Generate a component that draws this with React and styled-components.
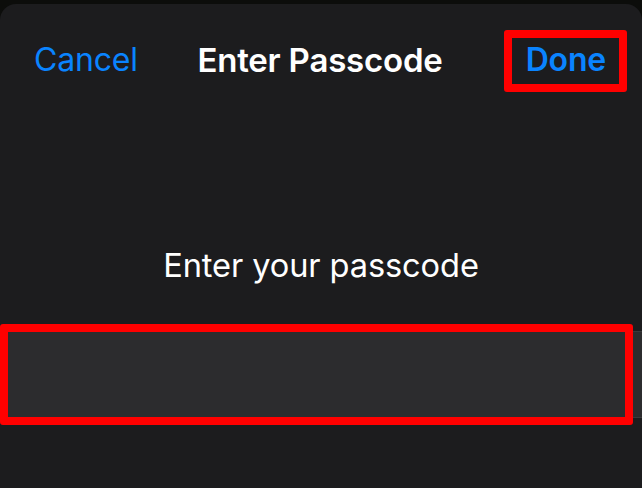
import React from 'react'
import styled, { createGlobalStyle } from 'styled-components'

const Global = createGlobalStyle`
  html, body {
    margin: 0;
    padding: 0;
    background: #0c0d0b;
  }
  body {
    font-family: Inter, 'Noto Sans', 'Liberation Sans', sans-serif;
    -webkit-font-smoothing: antialiased;
  }
`

const Page = styled.div`
  width: 642px;
  height: 488px;
  padding-top: 4px;
  box-sizing: border-box;
  overflow: hidden;
`

const Sheet = styled.div`
  height: 100%;
  background: #1c1c1e;
  border-radius: 16px 16px 0 0;
  display: flex;
  flex-direction: column;
`

const NavBar = styled.div`
  height: 112px;
  display: grid;
  grid-template-columns: 1fr auto 1fr;
  align-items: center;
  padding: 0 36px 0 34px;
`

const NavButton = styled.button`
  background: none;
  border: none;
  padding: 0;
  font-family: inherit;
  font-size: 32px;
  line-height: 38px;
  font-weight: ${p => (p.$bold ? 600 : 400)};
  color: #0a84ff;
  justify-self: ${p => p.$align};
  letter-spacing: -0.2px;
`

const Highlight = styled.span`
  position: relative;
  &::after {
    content: '';
    position: absolute;
    left: -22px;
    right: -21px;
    top: -10px;
    bottom: -13px;
    border: 8px solid #ff0000;
    border-radius: 3px;
    pointer-events: none;
  }
`

const Title = styled.div`
  font-size: 33px;
  line-height: 38px;
  font-weight: 600;
  color: #fff;
  letter-spacing: -0.2px;
`

const Body = styled.div`
  display: flex;
  flex-direction: column;
  align-items: center;
  padding-top: 130px;
`

const Prompt = styled.div`
  font-size: 32.6px;
  line-height: 38px;
  font-weight: 400;
  color: #fff;
  letter-spacing: -0.1px;
`

const Field = styled.div`
  margin-top: 47px;
  align-self: stretch;
  height: 85px;
  background: #2c2c2e;
  border-top: 1px solid #3a3a3c;
  border-bottom: 1px solid #3a3a3c;
  position: relative;
  &::after {
    content: '';
    position: absolute;
    left: 0;
    right: 9px;
    top: -8px;
    bottom: -8px;
    border: 8px solid #ff0000;
    border-radius: 3px;
    pointer-events: none;
  }
`

export default function App() {
  return (
    <>
      <Global />
      <Page>
        <Sheet>
          <NavBar>
            <NavButton $align="start">Cancel</NavButton>
            <Title>Enter Passcode</Title>
            <NavButton $align="end" $bold>
              <Highlight>Done</Highlight>
            </NavButton>
          </NavBar>
          <Body>
            <Prompt>Enter your passcode</Prompt>
            <Field />
          </Body>
        </Sheet>
      </Page>
    </>
  )
}
